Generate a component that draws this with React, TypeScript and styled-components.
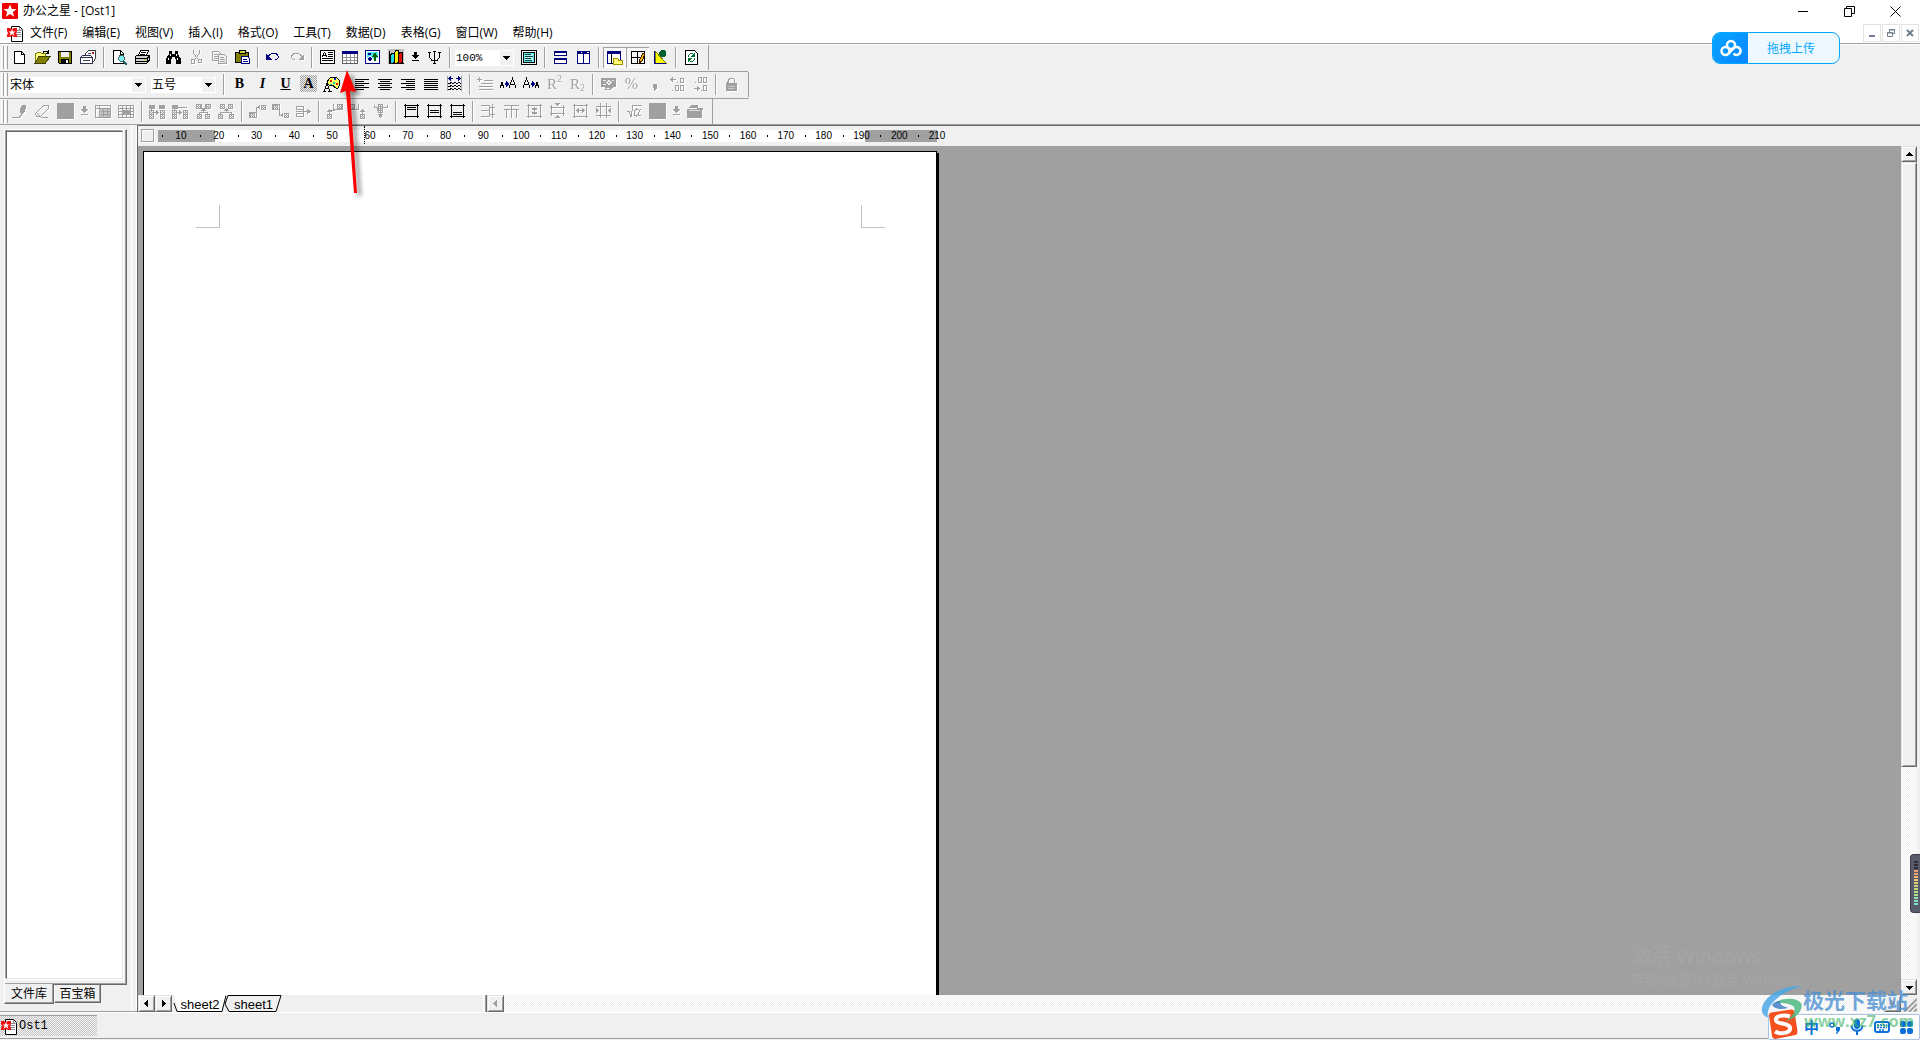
import React from 'react';
import styled, { createGlobalStyle, css } from 'styled-components';

const ui = '"Open Sans", "Noto Sans CJK SC", sans-serif';
const face = '#f0f0f0';
const shade = '#a0a0a0';
const dark = '#696969';
const navy = '#000080';

const Global = createGlobalStyle`
  html, body, #root { height: 100%; margin: 0; }
  body { overflow: hidden; background: ${face}; color: #000; font: 12px/16px ${ui}; }
  * { box-sizing: border-box; }
  button, select { font: inherit; color: inherit; margin: 0; padding: 0; border: 0; background: none; border-radius: 0; }
  svg { display: block; flex: none; }
`;

const dither = (a: string, b: string) => css`
  background: repeating-conic-gradient(${a} 0 25%, ${b} 0 50%) 0 0 / 2px 2px;
`;
const raised = css`
  background: ${face};
  border: 1px solid;
  border-color: #e3e3e3 ${dark} ${dark} #e3e3e3;
  box-shadow: inset 1px 1px #fff, inset -1px -1px ${shade};
`;

const Shell = styled.div`
  display: flex;
  flex-direction: column;
  height: 100vh;
  position: relative;
`;

/* title and menu */
const TitleBar = styled.header`
  display: flex;
  align-items: center;
  gap: 5px;
  height: 23px;
  padding: 0 19px 1px 2px;
  background: #fff;
`;
const Title = styled.h1`
  flex: 1;
  margin: 0;
  font-size: 12px;
  font-weight: 400;
`;
const Caption = styled.button`
  display: grid;
  place-items: center;
  width: 12px;
  height: 16px;
  margin-left: 29px;
`;
const MenuBar = styled.nav`
  display: flex;
  align-items: center;
  height: 21px;
  padding-left: 7px;
  background: #fff;
  border-bottom: 1px solid ${shade};
`;
const MenuList = styled.div`
  flex: 1;
  display: flex;
  gap: 15px;
  padding-left: 6px;
`;
const MdiButtons = styled.div`
  display: flex;
  gap: 1px;
  padding-right: 1px;
`;
const MdiButton = styled.button`
  display: grid;
  place-items: center;
  width: 18px;
  height: 18px;
  border: 1px solid #e3e3e3;
`;

/* toolbars */
const Toolbars = styled.div`
  border-top: 1px solid #fff;
  height: 81px;
  border-bottom: 1px solid ${shade};
`;
const Strip = styled.div<{ $rule?: boolean }>`
  display: flex;
  width: max-content;
  min-width: ${p => (p.$rule ? '748px' : '0')};
  height: 27px;
  padding-left: 1px;
  border-bottom: ${p => (p.$rule ? `1px solid ${shade}` : '0')};
`;
const Bar = styled.div`
  display: flex;
  align-items: flex-start;
  height: 25px;
  border-right: 1px solid ${shade};
  padding-right: 5px;
`;
const Grip = styled.span`
  width: 7px;
  height: 23px;
  margin-top: 1px;
  background: linear-gradient(90deg, #fff 0 1px, ${face} 1px 2px, ${shade} 2px 3px, #fff 3px 5px, ${face} 5px 6px, ${shade} 6px 7px);
`;
const Sep = styled.span`
  width: 8px;
  height: 21px;
  margin-top: 2px;
  background: linear-gradient(90deg, transparent 3px, ${shade} 3px 4px, #fff 4px 5px, transparent 5px);
`;
const Tool = styled.button<{ $off?: boolean; $on?: boolean; $slim?: boolean }>`
  display: grid;
  place-items: center;
  width: ${p => (p.$slim ? 15 : 23)}px;
  height: 21px;
  margin-top: 2px;
  padding-bottom: 2px;
  svg { filter: ${p => (p.$off ? 'drop-shadow(1px 1px 0 #fff)' : 'none')}; }
  ${p => p.$on && css`
    ${dither('#fff', '#f0f0f0')}
    box-shadow: inset 1px 1px ${shade}, inset -1px -1px #fff;
  `}
`;
const Letter = styled.span<{ $style: string }>`
  display: grid;
  place-items: center;
  width: 17px;
  height: 17px;
  font: ${p => (p.$style === 'italic' ? 'italic bold' : 'bold')} 14px/17px "Liberation Serif", serif;
  text-decoration: ${p => (p.$style === 'underline' ? 'underline' : 'none')};
  ${p => p.$style === 'shade' && dither('#a0a0a0', '#f0f0f0')}
`;
const Combo = styled.span<{ $w: number; $mono?: boolean }>`
  position: relative;
  width: ${p => p.$w}px;
  height: 16px;
  margin: 5px 4px 0 1px;
  background: #fff;
  select {
    display: block;
    appearance: none;
    width: 100%;
    height: 16px;
    padding-left: 1px;
    outline: 0;
    font: ${p => (p.$mono ? '11px/14px "Liberation Mono", monospace' : `12px/16px ${ui}`)};
  }
  &::after {
    content: '';
    position: absolute;
    right: 1px;
    top: 1px;
    width: 13px;
    height: 14px;
    pointer-events: none;
    background: ${face};
  }
  svg { position: absolute; right: 4px; top: 6px; z-index: 1; pointer-events: none; }
`;

/* body */
const Main = styled.main`
  flex: 1;
  display: flex;
  min-height: 0;
`;
const Side = styled.aside`
  display: flex;
  flex-direction: column;
  width: 137px;
  padding: 4px 10px 7px 4px;
  border-bottom: 1px solid ${shade};
  background: linear-gradient(90deg, transparent 131px, #fff 131px 132px, transparent 132px 136px, #fff 136px);
`;
const SideFrame = styled.div`
  flex: 1;
  display: flex;
  padding: 1px 2px 5px 0;
  border-left: 1px solid #fff;
  border-top: 1px solid #fff;
  border-right: 1px solid ${dark};
  border-bottom: 1px solid ${dark};
  box-shadow: inset -1px -1px ${shade};
`;
const Files = styled.div`
  flex: 1;
  background: #fff;
  border: 1px solid;
  border-color: ${dark} #e3e3e3 #e3e3e3 ${dark};
  box-shadow: -1px -1px ${shade}, 1px 1px #fff;
  margin: 0 1px;
`;
const SideTabs = styled.div`
  display: flex;
  align-items: flex-start;
`;
const SideTab = styled.button<{ $on?: boolean }>`
  width: ${p => (p.$on ? 50 : 47)}px;
  height: ${p => (p.$on ? 20 : 18)}px;
  flex: none;
  margin-top: ${p => (p.$on ? -1 : 0)}px;
  background: ${face};
  border: 1px solid ${dark};
  border-top: 0;
  border-left-color: #fff;
  box-shadow: inset -1px -1px ${shade};
  line-height: 16px;
`;
const Doc = styled.section`
  flex: 1;
  display: flex;
  flex-direction: column;
  min-width: 0;
  border-left: 1px solid ${dark};
  border-top: 1px solid ${dark};
  padding-right: 3px;
`;
const RulerRow = styled.div`
  position: relative;
  display: flex;
  height: 20px;
  padding: 3px 0 0 3px;
`;
const Corner = styled.button`
  width: 13px;
  height: 13px;
  border: 1px solid ${shade};
  box-shadow: inset 1px 1px #fff, 1px 1px #fff;
  margin-right: 4px;
`;
const Ruler = styled.ol`
  display: grid;
  grid-template-columns: repeat(21, 1fr);
  width: 798px;
  height: 12px;
  margin: 1px 0 0;
  padding: 0 0 0 4px;
  list-style: none;
  font: 10px/12px "Liberation Sans", sans-serif;
  text-align: center;
  background: linear-gradient(90deg, ${shade} 57px, #fff 57px 707px, ${shade} 707px 779px, transparent 779px);
  li { background: linear-gradient(#000, #000) 0 5px / 1px 2px no-repeat; white-space: nowrap; }
`;
const Marker = styled.span`
  position: absolute;
  left: 226px;
  top: 0;
  height: 18px;
  border-left: 1px dotted #000;
`;
const View = styled.div`
  flex: 1;
  display: flex;
  min-height: 0;
`;
const Canvas = styled.div`
  flex: 1;
  background: ${shade};
  padding: 5px 0 0 5px;
  overflow: hidden;
`;
const Paper = styled.div`
  display: flex;
  justify-content: space-between;
  width: 794px;
  height: 1123px;
  padding: 53px 51px 0 52px;
  background: #fff;
  border: 1px solid #000;
  box-shadow: 2px 2px #000;
`;
const Crop = styled.span<{ $left?: boolean }>`
  width: 24px;
  height: 23px;
  border-bottom: 1px solid #c0c0c0;
  ${p => (p.$left ? 'border-right: 1px solid #c0c0c0;' : 'border-left: 1px solid #c0c0c0;')}
`;
const VScroll = styled.div`
  display: flex;
  flex-direction: column;
  width: 16px;
  ${dither('#fff', '#f0f0f0')}
`;
const Arrow = styled.button`
  ${raised}
  display: grid;
  place-items: center;
  flex: none;
  width: 16px;
  height: 16px;
`;
const Thumb = styled.div`
  ${raised}
  flex: 604 1 0;
`;
const Rest = styled.div`
  flex: 213 1 0;
`;
const Bottom = styled.div`
  display: flex;
  height: 17px;
`;
const SheetTabs = styled.div`
  display: flex;
  width: 311px;
  padding-left: 2px;
`;
const SheetTab = styled.button<{ $on?: boolean }>`
  position: relative;
  width: ${p => (p.$on ? 52 : 55)}px;
  height: 17px;
  font: 13px/19px "Liberation Sans", sans-serif;
  svg { position: absolute; left: 0; top: 0; z-index: 0; overflow: visible; }
  span { position: relative; }
`;
const Split = styled.span`
  width: 4px;
  border-left: 1px solid #fff;
  border-right: 1px solid ${dark};
  box-shadow: inset -1px 0 ${shade};
`;
const HTrack = styled.div`
  flex: 1;
  display: flex;
  justify-content: flex-end;
  ${dither('#fff', '#f0f0f0')}
`;
const NavArrow = styled(Arrow)`
  width: 17px;
  height: 17px;
`;
const Status = styled.footer`
  display: flex;
  height: 28px;
  padding: 2px 0 4px;
  border-top: 1px solid #fff;
  background: linear-gradient(${face} 25px, ${shade} 25px 26px, ${face} 26px);
`;
const DocButton = styled.button`
  display: flex;
  align-items: center;
  gap: 1px;
  width: 97px;
  height: 21px;
  padding: 0 0 0 1px;
  ${dither('#c4c4c4', '#f4f4f4')}
  border-top: 1px solid ${shade};
  font: 12px/16px "Liberation Mono", monospace;
`;

/* floating things */
const Upload = styled.button`
  position: absolute;
  right: 80px;
  top: 32px;
  display: flex;
  width: 128px;
  height: 32px;
  border: 1px solid #06a7ff;
  border-radius: 8px;
  background: #eef9ff;
  color: #06a7ff;
  overflow: hidden;
  line-height: 31px;
`;
const UploadIcon = styled.span`
  display: grid;
  place-items: center;
  width: 35px;
  height: 30px;
  background: linear-gradient(135deg, #06a7ff, #0a84ff);
`;
const UploadText = styled.span`
  flex: 1;
  text-align: center;
  padding-right: 5px;
`;
const Activate = styled.div`
  position: absolute;
  right: 93px;
  bottom: 50px;
  width: 196px;
  color: #a6a6a6;
  font-size: 14px;
  line-height: 20px;
  white-space: nowrap;
  strong { display: block; font-size: 20px; line-height: 28px; font-weight: 400; }
`;
const Meter = styled.div`
  position: absolute;
  right: 0;
  bottom: 127px;
  width: 10px;
  height: 59px;
  padding: 6px 1px 7px 3px;
  background: #575b6b;
  border: 1px solid #3a3d4a;
  border-right: 0;
  border-radius: 4px 0 0 4px;
  i {
    display: block;
    height: 45px;
    width: 4px;
    background:
      repeating-linear-gradient(#575b6b00 0 1px, #575b6b 1px 3px),
      linear-gradient(#2b2e3a 8px, #f0a070 8px 13px, #e8d070 20px, #b8dc80 30px, #70e0d0);
    background:
      repeating-linear-gradient(transparent 0 2px, #575b6b 2px 3px),
      linear-gradient(#2b2e3a 8px, #f0a070 8px 13px, #e8d070 20px, #b8dc80 30px, #70e0d0);
  }
`;
const Ime = styled.div`
  position: absolute;
  right: 0;
  bottom: 0;
  display: flex;
  align-items: center;
  width: 152px;
  height: 26px;
  padding: 0 6px 0 35px;
  justify-content: space-between;
  background: #fff;
  border: 1px solid #a9c4e4;
  border-radius: 2px;
  color: #0a6fd8;
  font: bold 15px/24px "Noto Sans CJK SC", sans-serif;
`;
const SogouMark = styled.svg`
  position: absolute;
  left: -3px;
  bottom: -2px;
`;
const Site = styled.div`
  position: absolute;
  right: 8px;
  bottom: 6px;
  width: 151px;
  height: 53px;
  pointer-events: none;
  svg { position: absolute; left: 0; top: 5px; }
`;
const SiteName = styled.div`
  position: absolute;
  left: 42px;
  top: 5px;
  font: bold 21px/26px "Noto Sans CJK SC", sans-serif;
  color: #4a8fd0cc;
  white-space: nowrap;
`;
const SiteUrl = styled.div`
  position: absolute;
  left: 43px;
  top: 30px;
  font: bold 16px/20px "Open Sans", sans-serif;
  color: #3cb46499;
`;
const Pointer = styled.svg`
  position: absolute;
  left: 335px;
  top: 68px;
  pointer-events: none;
`;

/* icon shapes: [path, stroke, fill] on a 17 x 17 pixel grid */
type Shape = [string, string, string?];
const k = '#000';
const g = shade;
const lines = (rows: [number, number, number][]) => rows.map(([x, y, w]) => `M${x} ${y}.5h${w}`).join('');
const sqs = (pts: [number, number][]) => pts.map(([x, y]) => `M${x} ${y}h5v1h-5zM${x} ${y + 1}h1v3h-1zM${x + 4} ${y + 1}h1v3h-1zM${x} ${y + 4}h5v1h-5zM${x + 2} ${y + 1}h1v1h-1zM${x + 1} ${y + 2}h1v1h-1zM${x + 3} ${y + 2}h1v1h-1zM${x + 2} ${y + 3}h1v1h-1z`).join('');
const frame = 'M1 3.5h15M1 14.5h15M2.5 2v14M14.5 2v14';

const icons: Record<string, Shape[]> = {
  fresh: [['M3.5 3.5h7l3 3v9h-10z', k, '#fff'], ['M10.5 3.5v3h3', k]],
  open: [['M1.5 14.5v-9h1l1-1h3l1 1h4v3', '#808000', '#ffff80'], ['M1 15l4-6.500h11l-4.500 6.500z', '#404000', '#808000'], ['M9 4.500c2-2 4-2 5 0M14.500 2v3h-3', k]],
  save: [['M1.5 3.5h13v12h-12l-1-1z', k, '#808000'], ['M4 4h8v5h-8z', '', '#f0f0f0'], ['M4 11h8v4h-8z', '', k], ['M9 12h2v3h-2z', '', '#f0f0f0']],
  send: [['M5.500 9.500v-4l3-3h7v8l-2 3h-3', '#404040', '#fff'], ['M.5 9.500l2-2h8l2 2v6h-12zM.5 9.500h12', '#303050', '#fff'], ['M3 12.500h7M8 5.500h3', '#404060'], ['M12 4h2v2h-2z', '', '#c02020']],
  preview: [['M2.5 2.5h7l3 3v10h-10z', k, '#fff'], ['M9.500 3v3h3', k], ['M7.500 9.500l1.500-2h3l1.500 2v2l-1.500 1.500h-3l-1.500-1.500z', '#406060', '#80f0f0'], ['M12 12.500l4 4M12 13.500l3 3', '#206060']],
  print: [['M4.500 7.500l2-5h8l-2 5', k, '#fff'], ['M7 4.500h5M6 6.5h5', k], ['M1.500 8.500l2-1.500h12v5l-3 3.500h-11z', k, '#d0d0d0'], ['M2 10.500h11M2 13.500h11M13.500 10l2-2M13.500 10v4', k], ['M10 11.500h2', '#d0c000']],
  find: [['M4 3h3v3h3v-3h3v3l3 5v5h-5v-5h-1v-2h-3v2h-1v5h-5v-5l3-5z', '', k], ['M3.500 10v2M12.500 10v2M5.500 6v2M11.500 6v2', '#fff']],
  cut: [['M5.500 2v3l4 6M11.500 2v3l-4 6', g], ['M3.500 11.500h3v4h-3zM10.500 11.500h3v3h-3z', g]],
  copy: [['M1.500 3.500h6l2 2v7h-8zM3 6.500h4M3 8.500h5M3 10.500h4', g], ['M7.500 6.500h6l2 2v7h-8z', g, face], ['M9 9.500h4M9 11.500h5M9 13.500h5', g]],
  paste: [['M1.500 4.500h13v10h-13z', k, '#808000'], ['M5 2h6v3h-6z', k, '#d0d040'], ['M7.500 8.500h6l2 2v5h-8z', navy, '#fff'], ['M9 11.500h4M9 13.500h5', navy]],
  undo: [['M3 9.500c1-4 8-6 10-2c1 3-1 4-3 4.500', navy], ['M1 6v6h6z', '', navy]],
  redo: [['M14 9.500c-1-4-8-6-10-2c-1 3 1 4 3 4.500', g], ['M16 6v6h-6z', '', g]],
  doc: [['M1.500 2.500h14v13h-14z', k, '#fff'], ['M3 8.500l2.500-4 2.500 4M4 7.500h3M9 4.500h5M9 6.500h5M9 8.500h5M3 10.500h11M3 12.500h11', k]],
  table: [['M.500 3.500h15v12h-15z', '#606060', '#fff'], ['M0 3h16v3h-16z', '', navy], ['M1 9.500h14M1 12.500h14M4.500 6v9M8.500 6v9M12.500 6v9', '#909090']],
  picture: [['M.500 2.500h14v13h-14z', navy, '#fff'], ['M2 4h11v10h-11z', '', '#40e8f0'], ['M2 14v-4l3-2 3 3 5-1v4z', '', '#fff'], ['M3 5h3v2h-3zM2 11l3-3 2 3-2 3z', '', navy], ['M10 4l3 5h-2v4h-2v-4h-2z', '', '#006000']],
  chart: [['M0 1h16v15h-16z', '', '#c0c0c0'], ['M1.500 3v12.500h14', k], ['M2.500 7.500l1-2h3v8l-1 2h-3z', k, '#20d8e8'], ['M6.500 5.500l1-3h3v11l-1 2h-3z', k, '#f8f000'], ['M10.500 7.500l1-3h3v9l-1 2h-3z', k, '#e01010']],
  drop: [['M5 4h3v3h2l-3.500 4-3.500-4h2z', '', k], ['M3 12.500h7', k]],
  dropOff: [['M5 4h3v3h2l-3.500 4-3.500-4h2z', '', g], ['M3 12.500h7', g]],
  psi: [['M2 4.500h3M12 4.500h3M7 3.500h3M7 15.500h3M8.500 4v11', k], ['M3.500 5v4l2 3h6l2-3v-4', k]],
  full: [['M.500 2.500h15v14h-15z', k, '#f0f0f0'], ['M2.500 4.500h11v10h-11z', k, '#60e8f0'], ['M4 6h8v7h-8z', '', '#b8f4f4'], ['M4 6.500h6M4 8.500h8M4 10.500h6M4 12.500h7', '#004040']],
  horiz: [['M2 3h13v5h-13zM2 10h13v6h-13z', '', navy], ['M3 5h11v2h-11zM3 12h11v3h-11z', '', '#fff']],
  vert: [['M2 3h13v13h-13z', '', navy], ['M3 6h5v9h-5zM9 6h5v9h-5z', '', '#fff'], ['M12 4.500h2M6 4.500h1', '#fff']],
  folderWin: [['M1.500 3.500h13v12h-13z', navy, '#fff'], ['M1 3h14v3h-14z', '', navy], ['M5.500 6v10', k], ['M7.500 16.500v-6h4l1 1.500h4v4.500z', '#a09000', '#fff870']],
  editWin: [['M2.500 3.500h13v12h-13zM8.500 4v11M3 9.500h12', k], ['M10 15l1-4 3-6 2 1-3 7z', '#402000', '#f0b000']],
  shapes: [['M3 3v12h11z', '#808000', '#ffff00'], ['M2.500 3v13M2 15.500h12', navy], ['M9 2h3l2 2v3l-2 2h-3l-2-2v-3z', '', '#006030']],
  refresh: [['M2.500 2.500h9l3 3v11h-12z', k, '#fff'], ['M5.500 9c0-4 4-4 6-2M11.500 10c0 4-4 4-6 2', '#007030'], ['M12 4v5h-4zM5 15v-5h4z', '', '#007030']],
  palette: [['M4.500 6l3-3.500h6l3 3v5l-2 3-3-1-1-2h-3l-3-1z', k, '#ffff60'], ['M7 5h2v2h-2zM13 8h2v2h-2z', '', '#e01010'], ['M11 3h2v2h-2z', '', '#1020d0'], ['M7 9h2v1h-2zM10 7h2v2h-2z', '', '#10c0c0'], ['M1 16.500l3-8 3 8M2 13.500h4M0 16.500h3M5 16.500h4', k]],
  left: [[lines([[1, 4, 14], [1, 6, 9], [1, 8, 14], [1, 10, 9], [1, 12, 14], [1, 14, 9]]), k]],
  center: [[lines([[1, 4, 14], [3, 6, 10], [1, 8, 14], [3, 10, 10], [1, 12, 14], [3, 14, 10]]), k]],
  right: [[lines([[1, 4, 14], [6, 6, 9], [1, 8, 14], [6, 10, 9], [1, 12, 14], [6, 14, 9]]), k]],
  justify: [[lines([[1, 4, 14], [1, 6, 14], [1, 8, 14], [1, 10, 14], [1, 12, 14], [1, 14, 14]]), k]],
  spread: [['M1.500 1v15M15.500 1v15', g], ['M3 3.500h4M10 3.500h4', navy], ['M5 1l-3 2.500 3 2.500zM12 1l3 2.500-3 2.500z', '', navy], ['M2 8.500h2l1-1 2 1 2-1 2 1 2-1 2 1M2 11.500h2l1-1 2 1 2-1 2 1 2-1 2 1M2 14.500h2l1-1 2 1 2-1 2 1 2-1 2 1', k]],
  indent: [['M0 4.500h5M2.500 2v5', g], ['M7 5.500h9M4 8.500h12M2 11.500h14M2 14.500h14', g]],
  grow: [['M0 12.500l2-5 2 5M1 10.500h3M9 12.500l3.500-9 3.500 9M10 9.500h5', k], ['M5 8h1v-2l3 3-3 3v-2h-1z', '', navy]],
  shrink: [['M0 12.500l3.500-9 3.500 9M1 9.500h5M12 12.500l2-5 2 5M12 10.500h4', k], ['M8 8h1v-2l3 3-3 3v-2h-1z', '', navy]],
  money: [['M1 3h15v9h-3l-3 3h-5v-3h-4z', '', g], ['M3 5.500h3M12 5.500h2M7 7.500l2-2 2 2-2 2zM3 9.500h3M6 13.500h4', face]],
  comma: [['M7 9h4v4l-2 3h-1v-3h-1z', '', g]],
  incr: [['M2 4.500h5M4 2.500l-2 2 2 2', g], ['M8 7h1v1h-1zM3 15h1v1h-1z', '', g], ['M11.500 3.500h3v4h-3zM6.500 10.500h3v5h-3zM11.500 10.500h3v5h-3z', g]],
  decr: [['M2 13.500h5M5 11.500l2 2-2 2', g], ['M3 7h1v1h-1zM9 15h1v1h-1z', '', g], ['M6.500 2.500h3v5h-3zM11.500 2.500h3v5h-3zM11.500 10.500h3v5h-3z', g]],
  lock: [['M3 8h11v8h-11z', '', g], ['M5.500 8v-3l2-2h3l1 2v3M4.500 8v-2', g], ['M5 11.500h7M5 13.500h7', '#c8c8c8']],
  pen: [['M9 9l2-6h4v3l-2 5-3 2z', '', g], ['M1 15.500h7l3-3M9 6l4 3', g]],
  eraser: [['M1.500 11.500l8-8h5v3l-8 8h-4z', g], ['M2 10l5 5M7 15.500h7', g]],
  block: [['M0 1h17v16h-17z', '', g]],
  grid: [['M.500 3.500h15v12h-15z', g], ['M1 6.500h14M4.500 4v12', g], ['M5 7h10v8h-10z', '', '#c4c4c4'], ['M6 9.500h9M6 12.500h9M8.500 7v8M12.500 7v8', g]],
  gridDense: [['M.500 3.500h15v12h-15z', g], ['M1 6.500h15M1 9.500h15M1 12.500h15M4.500 4v12M8.500 4v12M12.500 4v12', g], ['M5 8h8v5h-8z', '', g]],
  mergeA: [['M0 3h6v4h-6zM10 3h6v4h-6z', '', g], [sqs([[0, 8], [0, 12], [11, 8], [11, 12]]), '', g], ['M5 10.500h5M2.500 6v3', g], ['M7 8l3 2.500-3 2.500z', '', g]],
  mergeB: [['M0 3h6v4h-6z', '', g], [sqs([[0, 8], [0, 12], [11, 8], [11, 12]]), '', g], ['M5 10.500h5M2.500 6v3M6 5.500h9', g], ['M7 8l3 2.500-3 2.500z', '', g]],
  treeA: [[sqs([[1, 2], [11, 2], [2, 12], [10, 12]]), '', g], ['M6.500 2v4h4v-4M8.500 6v4M4.500 12v-2h8v2', g], ['M6 9l2.500-3 2.500 3z', '', g]],
  treeB: [[sqs([[2, 2], [10, 2], [0, 12], [11, 12]]), '', g], ['M8.500 6v4M2.500 12v-2h11v2', g], ['M6 9l2.500-3 2.500 3z', '', g]],
  insA: [['M.500 10.500h7v5h-7zM7.500 10v-5h3', g], [sqs([[12, 3], [1, 11]]), '', g], ['M11 2.500l-3 2.500 3 2.500z', '', g]],
  insB: [['M.500 2.500h7v5h-7zM7.500 8v5h3', g], [sqs([[1, 3], [12, 11]]), '', g], ['M11 10.500l-3 2.500 3 2.500z', '', g]],
  insC: [['M1.500 4.500h7v3h-7zM1.500 11.500h7v3h-7zM8.500 7.500v4M1 9.500h13', g], ['M12 6.500l4 3-4 3z', '', g]],
  upA: [[sqs([[1, 12], [11, 2]]), '', g], ['M3.500 12v-5M3.500 8.500h5M7.500 2v5h9v-5', g], ['M1 10l2.500-3 2.500 3z', '', g]],
  upB: [[sqs([[1, 2], [11, 12]]), '', g], ['M13.500 12v-5M.500 2v5h9v-5', g], ['M11 10l2.500-3 2.500 3z', '', g]],
  upC: [['M2 2.500v3h3.500v3h5v-3h4.500v-3M8.500 3v12', g], [sqs([[6, 2], [6, 6]]), '', g], ['M5.500 12l3 4 3-4z', '', g]],
  top: [[frame, k], ['M4 5.500h9M4 7.500h9', k]],
  middle: [[frame, k], ['M4 8.500h9M4 10.500h9', k]],
  bottom: [[frame, k], ['M4 10.500h9M4 12.500h9', k]],
  rowsA: [['M1 3.500h8v11h-8M1 8.500h8M12.500 2v14M10 5.500h5M10 12.500h5', g]],
  colsA: [['M1 3.500h15M3.500 7v9M8.500 3v13M13.500 7v9M1 7.500h15', g]],
  fitA: [[frame, g], ['M8.500 5v8M6 6.500h5M6 11.500h5', g], ['M6 8l2.500-3 2.500 3zM6 10l2.500 3 2.500-3z', '', g]],
  fitB: [['M1 5.500h15M1 11.500h15M2.500 3v11M14.500 3v11', g], ['M6 1h5l-2.500 3zM6 16h5l-2.500-3z', '', g]],
  fitC: [[frame, g], ['M4 8.500h9', g], ['M7 6l-3 2.500 3 2.500zM10 6l3 2.500-3 2.500z', '', g]],
  fitD: [['M5.500 1v15M11.500 1v15M1 4.500h15M1 13.500h15', g], ['M1 6v5l3-2.500zM16 6v5l-3-2.500z', '', g]],
  root: [['M1 9.500h2l2 5.500 2-11.500h9M14.500 7l-2 4v2l2 1M12.500 8l-2-1-2 2v4l2 1 2-3', g]],
  bag: [['M0 7h15v9h-15z', '', g], ['M2 6l3-3h5v3h5v2', g], ['M3 4h8v2h-8z', '', g], ['M2 8.500h11', '#e0e0e0']],
};

function Icon({ name, w = 17 }: { name: string; w?: number }) {
  return (
    <svg width={w} height={17} viewBox={`0 0 ${w} 17`} shapeRendering="crispEdges" aria-hidden="true">
      {icons[name].map(([d, stroke, fill], i) => (
        <path key={i} d={d} stroke={stroke || 'none'} fill={fill || 'none'} />
      ))}
    </svg>
  );
}

const scripts: Record<string, [string, string, number]> = {
  sup: ['R', '2', 7],
  sub: ['R', '2', 16],
  percent: ['%', '', 0],
};
function ScriptIcon({ name }: { name: string }) {
  const [main, small, y] = scripts[name];
  return (
    <svg width={17} height={17} viewBox="0 0 17 17" fill={g} fontFamily="Liberation Serif, serif" aria-hidden="true">
      <text x={small ? 1 : 8.5} y={14} fontSize={small ? 15 : 16} textAnchor={small ? 'start' : 'middle'}>{main}</text>
      {small && <text x={11} y={y} fontSize={10}>{small}</text>}
    </svg>
  );
}

/* "|" separates groups, "!" marks an unavailable tool, "+" a pressed one */
function Tools({ list }: { list: string }) {
  return (
    <>
      {list.split(' ').map((item, i) => {
        if (item === '|') return <Sep key={i} />;
        const off = item[0] === '!';
        const on = item[0] === '+';
        const name = off || on ? item.slice(1) : item;
        const slim = name.startsWith('drop');
        return (
          <Tool key={i} type="button" aria-label={name} $off={off} $on={on} $slim={slim}>
            {scripts[name] ? <ScriptIcon name={name} /> : <Icon name={name} w={slim ? 13 : 17} />}
          </Tool>
        );
      })}
    </>
  );
}

function Choice({ label, value, w, mono }: { label: string; value: string; w: number; mono?: boolean }) {
  return (
    <Combo $w={w} $mono={mono}>
      <select aria-label={label} defaultValue={value}><option>{value}</option></select>
      <svg width="7" height="4" shapeRendering="crispEdges"><path d="M0 0h7l-3.500 4z" /></svg>
    </Combo>
  );
}

function Tri({ dir, color = '#000' }: { dir: 'u' | 'd' | 'l' | 'r'; color?: string }) {
  const d = { u: 'M1 6h7l-3.500-4z', d: 'M1 3h7l-3.500 4z', l: 'M6 1v7l-4-3.500z', r: 'M3 1v7l4-3.500z' }[dir];
  return <svg width="9" height="9" shapeRendering="crispEdges"><path d={d} fill={color} /></svg>;
}

const star = 'M8 1.500l1.800 4.500h4.700l-3.700 3 1.400 4.700-4.200-2.800-4.200 2.800 1.400-4.700-3.700-3h4.700z';
function DocIcon() {
  return (
    <svg width="17" height="17" viewBox="0 0 17 17">
      <path d="M4.500 1.500h8l3 3v12h-11z" fill="#fff" stroke="#000" />
      <path d="M9 5.500h5M9 7.500h5M9 9.500h5M9 11.500h5M12.500 2v3h3" stroke="#909090" fill="none" />
      <path d="M0 3h3l2 1 2-1h3v3l-1 2 1 2v2h-3l-2-1-2 1h-3v-2l1-2-1-2z" fill="#f01010" />
      <path d="M5 4l1 2.500h2.500l-2 1.500 1 2.700-2.500-1.700-2.500 1.700 1-2.700-2-1.500h2.500z" fill="#fff" />
    </svg>
  );
}

const menus = ['文件(F)', '编辑(E)', '视图(V)', '插入(I)', '格式(O)', '工具(T)', '数据(D)', '表格(G)', '窗口(W)', '帮助(H)'];

export default function App() {
  return (
    <Shell>
      <Global />
      <TitleBar>
        <svg width="16" height="16" viewBox="0 0 16 16"><rect width="16" height="16" rx="1" fill="#f00000" /><path d={star} fill="#fff" /></svg>
        <Title>办公之星 - [Ost1]</Title>
        <Caption aria-label="最小化"><svg width="10" height="11"><path d="M0 5.500h10" stroke="#000" /></svg></Caption>
        <Caption aria-label="还原"><svg width="11" height="11"><path d="M.5 2.500h7v8h-7zM2.500 2.500v-2h8v7h-3" fill="none" stroke="#000" /></svg></Caption>
        <Caption aria-label="关闭"><svg width="11" height="11"><path d="M.5.5l10 10M10.500.5l-10 10" stroke="#000" /></svg></Caption>
      </TitleBar>
      <MenuBar>
        <DocIcon />
        <MenuList>{menus.map(m => <button key={m} type="button">{m}</button>)}</MenuList>
        <MdiButtons>
          <MdiButton aria-label="最小化文档"><svg width="10" height="10"><path d="M2 8h6" stroke="#708090" strokeWidth="2" /></svg></MdiButton>
          <MdiButton aria-label="还原文档"><svg width="10" height="10"><path d="M1.500 4.500h5v4h-5zM1 5h6M3.500 4v-2.500h5v4h-2M3 2h6" fill="none" stroke="#708090" /></svg></MdiButton>
          <MdiButton aria-label="关闭文档"><svg width="10" height="10"><path d="M2 2l6 6M8 2l-6 6" stroke="#708090" strokeWidth="2" /></svg></MdiButton>
        </MdiButtons>
      </MenuBar>
      <Toolbars>
        <Strip $rule>
          <Bar>
            <Grip />
            <Tools list="fresh open save send | preview print | find !cut !copy paste | undo !redo | doc table picture chart drop psi |" />
            <Choice label="显示比例" value="100%" w={59} mono />
            <Tools list="full | horiz vert | +folderWin +editWin shapes | refresh" />
          </Bar>
        </Strip>
        <Strip $rule>
          <Bar>
            <Grip />
            <Choice label="字体" value="宋体" w={137} />
            <Choice label="字号" value="五号" w={65} />
            <Sep />
            <Tool aria-label="粗体"><Letter $style="bold">B</Letter></Tool>
            <Tool aria-label="斜体"><Letter $style="italic">I</Letter></Tool>
            <Tool aria-label="下划线"><Letter $style="underline">U</Letter></Tool>
            <Tool aria-label="底纹"><Letter $style="shade">A</Letter></Tool>
            <Tools list="palette | left center right justify spread | !indent grow shrink !sup !sub | !money !percent !comma !incr !decr | !lock" />
          </Bar>
        </Strip>
        <Strip>
          <Bar>
            <Grip />
            <Tools list="!pen !eraser !block !dropOff !grid !gridDense | !mergeA !mergeB !treeA !treeB | !insA !insB !insC | !upA !upB !upC | top middle bottom | !rowsA !colsA !fitA !fitB !fitC !fitD | !root !block !dropOff !bag" />
          </Bar>
        </Strip>
      </Toolbars>
      <Main>
        <Side>
          <SideFrame><Files /></SideFrame>
          <SideTabs>
            <SideTab type="button" $on>文件库</SideTab>
            <SideTab type="button">百宝箱</SideTab>
          </SideTabs>
        </Side>
        <Doc>
          <RulerRow>
            <Corner aria-label="制表位" />
            <Ruler>{Array.from({ length: 21 }, (_, i) => <li key={i}>{(i + 1) * 10}</li>)}</Ruler>
            <Marker />
          </RulerRow>
          <View>
            <Canvas><Paper><Crop $left /><Crop /></Paper></Canvas>
            <VScroll>
              <Arrow aria-label="向上"><Tri dir="u" /></Arrow>
              <Thumb />
              <Rest />
              <Arrow aria-label="向下"><Tri dir="d" /></Arrow>
            </VScroll>
          </View>
          <Bottom>
            <NavArrow aria-label="上一张"><Tri dir="l" /></NavArrow>
            <NavArrow aria-label="下一张"><Tri dir="r" /></NavArrow>
            <SheetTabs>
              <SheetTab type="button" $on>
                <svg width="52" height="17"><path d="M0 0l4.500 16h43l5-16z" fill="#fff" /><path d="M0 8l3 8.500h45l4-16" fill="none" stroke="#000" /></svg>
                <span>sheet2</span>
              </SheetTab>
              <SheetTab type="button">
                <svg width="55" height="17"><path d="M-1 9l3-8.500h53l-5 16h-47z" fill={face} stroke="#000" /></svg>
                <span>sheet1</span>
              </SheetTab>
            </SheetTabs>
            <Split />
            <NavArrow aria-label="向左"><Tri dir="l" color={shade} /></NavArrow>
            <HTrack><NavArrow aria-label="向右"><Tri dir="r" color={shade} /></NavArrow></HTrack>
            <svg width="16" height="17"><path d="M3 17l13-13M8 17l8-8M13 17l3-3" stroke={shade} strokeWidth="2" /></svg>
          </Bottom>
        </Doc>
      </Main>
      <Status><DocButton type="button"><DocIcon />Ost1</DocButton></Status>

      <Upload type="button">
        <UploadIcon>
          <svg width="22" height="18" viewBox="0 0 22 18" fill="none" stroke="#fff" strokeWidth="2.500">
            <circle cx="11" cy="6" r="4" /><circle cx="5.500" cy="12" r="4" /><path d="M8.500 14.500l5-5a4 4 0 1 1 0 5" />
          </svg>
        </UploadIcon>
        <UploadText>拖拽上传</UploadText>
      </Upload>
      <Pointer width="34" height="140" viewBox="0 0 34 140">
        <g fill="#f00" filter="drop-shadow(4px 3px 2px #0007)">
          <path d="M12 2l9 22-6-1 7 102h-3l-8-102-6 2z" />
        </g>
      </Pointer>
      <Activate><strong>激活 Windows</strong>转到“设置”以激活 Windows。</Activate>
      <Meter><i /></Meter>
      <Ime>
        <SogouMark width="34" height="32" viewBox="0 0 34 32">
          <path d="M3 6q0-2 2-2.500l20-3q3 0 3.500 2l3 20q0 3-2 3.500l-20 4q-3 0-3.500-3z" fill="#f4511e" />
          <path d="M24 7.500c-6-2-15-1-14 4 1 4 13 2 14 7 1 6-10 7-15 4" fill="none" stroke="#fff" strokeWidth="4" />
        </SogouMark>
        <span>中</span>
        <svg width="12" height="14" fill="#0a6fd8"><circle cx="3" cy="5" r="2" fill="none" stroke="#0a6fd8" strokeWidth="1.500" /><path d="M7 7h4v3l-3 4h-1l1-3h-1z" /></svg>
        <svg width="14" height="16" fill="none" stroke="#0a6fd8" strokeWidth="2"><rect x="5" y="1" width="4" height="8" rx="2" fill="#0a6fd8" /><path d="M1.500 6.500c0 7 11 7 11 0M7 12v4" /></svg>
        <svg width="16" height="12" fill="none" stroke="#0a6fd8" strokeWidth="2"><rect x="1" y="1" width="14" height="10" rx="2" /><path d="M3 4h10M3 6.500h10M5 9h6" strokeDasharray="2 1" strokeWidth="1.500" /></svg>
        <svg width="13" height="13" fill="#0a6fd8"><rect width="6" height="6" rx="2" /><rect x="7" width="6" height="6" rx="3" /><rect y="7" width="6" height="6" rx="2" /><rect x="7" y="7" width="6" height="6" rx="2" /></svg>
      </Ime>
      <Site>
        <svg width="44" height="40" viewBox="0 0 44 40">
          <path d="M42 0C22-1 3 10 1 22c-1 5 2 8 6 10C4 20 18 6 42 0z" fill="#4aa8e8" opacity=".85" />
          <path d="M14 17c8-6 22-5 26 0 3 6-4 15-16 19 8-6 12-12 8-16-4-3-11-3-18-3z" fill="#4cb880" opacity=".85" />
          <path d="M11 19c2-3 5-4 8-4 0 5 4 5 8 7-7 2-14 1-16-3z" fill="#3878c0" opacity=".8" />
        </svg>
        <SiteName>极光下载站</SiteName>
        <SiteUrl>www.xz7.com</SiteUrl>
      </Site>
    </Shell>
  );
}
